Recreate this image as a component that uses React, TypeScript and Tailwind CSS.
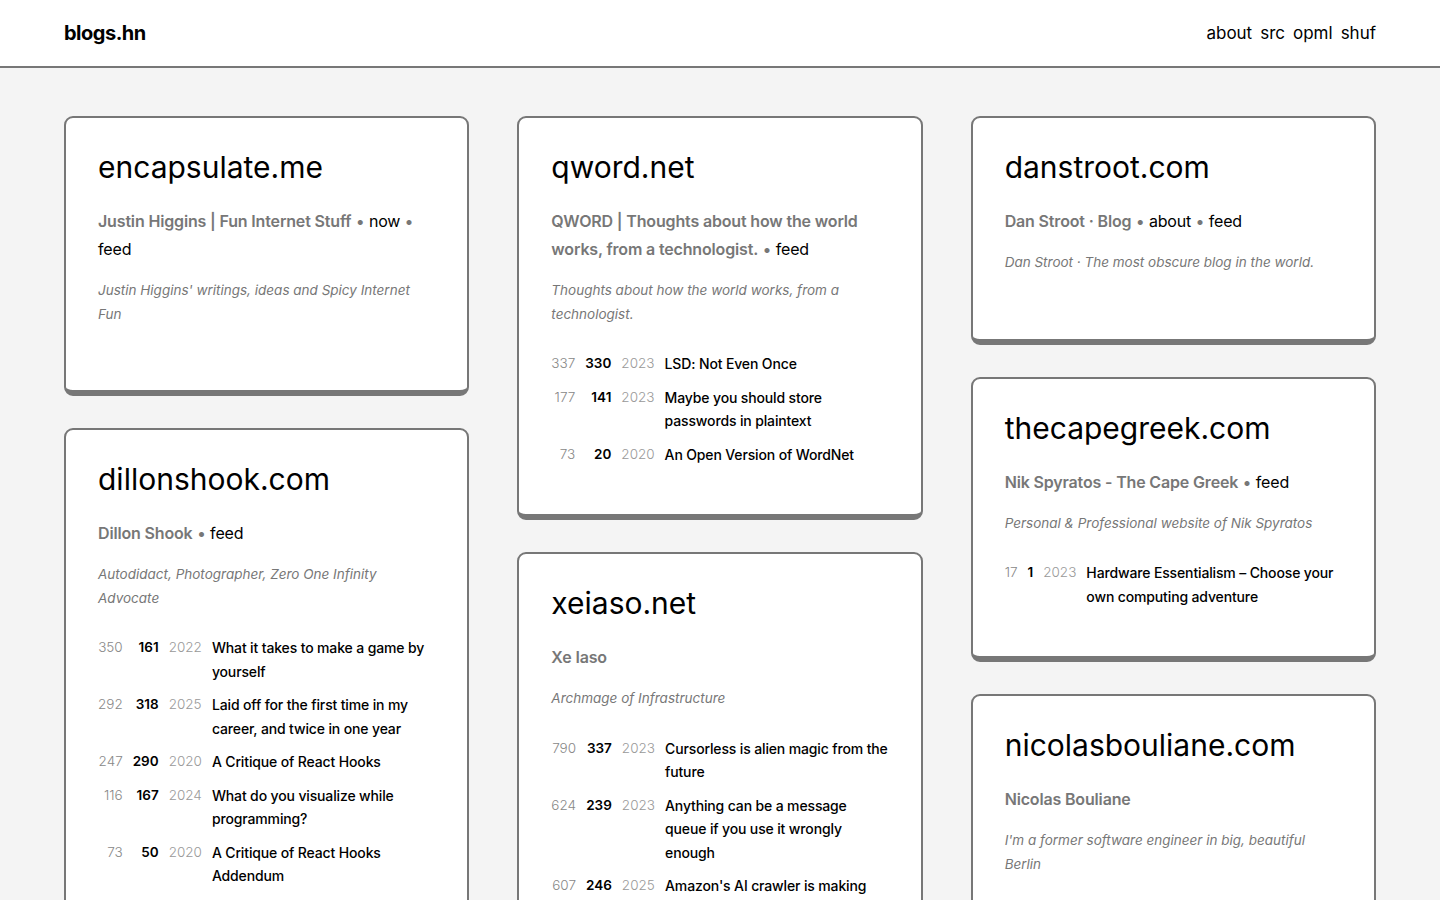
import React from 'react';

type Post = { points: number; comments: number; year: number; title: string };
type Blog = {
  domain: string;
  name: string;
  links: string[];
  description: string;
  posts: Post[];
};

const blogs: Record<string, Blog> = {
  encapsulate: {
    domain: 'encapsulate.me',
    name: 'Justin Higgins | Fun Internet Stuff',
    links: ['now', 'feed'],
    description: "Justin Higgins' writings, ideas and Spicy Internet Fun",
    posts: [],
  },
  dillon: {
    domain: 'dillonshook.com',
    name: 'Dillon Shook',
    links: ['feed'],
    description: 'Autodidact, Photographer, Zero One Infinity Advocate',
    posts: [
      { points: 350, comments: 161, year: 2022, title: 'What it takes to make a game by yourself' },
      { points: 292, comments: 318, year: 2025, title: 'Laid off for the first time in my career, and twice in one year' },
      { points: 247, comments: 290, year: 2020, title: 'A Critique of React Hooks' },
      { points: 116, comments: 167, year: 2024, title: 'What do you visualize while programming?' },
      { points: 73, comments: 50, year: 2020, title: 'A Critique of React Hooks Addendum' },
    ],
  },
  qword: {
    domain: 'qword.net',
    name: 'QWORD | Thoughts about how the world works, from a technologist.',
    links: ['feed'],
    description: 'Thoughts about how the world works, from a technologist.',
    posts: [
      { points: 337, comments: 330, year: 2023, title: 'LSD: Not Even Once' },
      { points: 177, comments: 141, year: 2023, title: 'Maybe you should store passwords in plaintext' },
      { points: 73, comments: 20, year: 2020, title: 'An Open Version of WordNet' },
    ],
  },
  xeiaso: {
    domain: 'xeiaso.net',
    name: 'Xe Iaso',
    links: [],
    description: 'Archmage of Infrastructure',
    posts: [
      { points: 790, comments: 337, year: 2023, title: 'Cursorless is alien magic from the future' },
      { points: 624, comments: 239, year: 2023, title: 'Anything can be a message queue if you use it wrongly enough' },
      { points: 607, comments: 246, year: 2025, title: "Amazon's AI crawler is making my git server unstable" },
      { points: 412, comments: 198, year: 2024, title: 'Anubis works' },
    ],
  },
  danstroot: {
    domain: 'danstroot.com',
    name: 'Dan Stroot · Blog',
    links: ['about', 'feed'],
    description: 'Dan Stroot · The most obscure blog in the world.',
    posts: [],
  },
  capegreek: {
    domain: 'thecapegreek.com',
    name: 'Nik Spyratos - The Cape Greek',
    links: ['feed'],
    description: 'Personal & Professional website of Nik Spyratos',
    posts: [
      { points: 17, comments: 1, year: 2023, title: 'Hardware Essentialism – Choose your own computing adventure' },
    ],
  },
  bouliane: {
    domain: 'nicolasbouliane.com',
    name: 'Nicolas Bouliane',
    links: [],
    description: "I'm a former software engineer in big, beautiful Berlin",
    posts: [
      { points: 120, comments: 64, year: 2023, title: 'I moved my blog to a static site' },
    ],
  },
};

const columns: Blog[][] = [
  [blogs.encapsulate, blogs.dillon],
  [blogs.qword, blogs.xeiaso],
  [blogs.danstroot, blogs.capegreek, blogs.bouliane],
];

function BlogCard({ blog }: { blog: Blog }) {
  return (
    <article className="bg-white border-2 border-b-[6px] border-[#777] rounded-[9px] px-8 pt-8 pb-12">
      <h2 className="text-[30px] leading-[34px] font-normal text-black mb-[23px]">
        <a href="#">{blog.domain}</a>
      </h2>
      <p className="text-[16px] leading-[28px] text-[#777] mb-4 tracking-[-0.01em]">
        <span className="font-semibold">{blog.name}</span>
        {blog.links.map((l) => (
          <React.Fragment key={l}>
            {' • '}
            <a href="#" className="text-black">
              {l}
            </a>
          </React.Fragment>
        ))}
      </p>
      <p className="text-[13.5px] leading-[23.5px] italic text-[#777] mb-4">{blog.description}</p>
      {blog.posts.length > 0 && (
        <div className="mt-[26px] grid grid-cols-[auto_auto_auto_1fr] gap-x-[10px] gap-y-[10px] text-[14px] leading-[23.5px]">
          {blog.posts.map((p) => (
            <React.Fragment key={p.title}>
              <span className="text-right text-[13.5px] text-[#888] font-light">{p.points}</span>
              <span className="text-right text-[13.5px] font-semibold text-black">{p.comments}</span>
              <span className="text-[13.5px] text-[#999] font-light">{p.year}</span>
              <a href="#" className="text-black font-medium tracking-[-0.01em]">
                {p.title}
              </a>
            </React.Fragment>
          ))}
        </div>
      )}
    </article>
  );
}

export default function App() {
  return (
    <div className="min-h-screen bg-[#f4f4f4] text-black" style={{ fontFamily: 'Inter, "Noto Sans", sans-serif' }}>
      <header className="bg-white border-b-2 border-[#777] h-[68px] px-16 flex items-center justify-between">
        <a href="#" className="text-[20px] font-bold tracking-tight">
          blogs.hn
        </a>
        <nav className="flex gap-2 text-[17px] pt-px">
          <a href="#">about</a>
          <a href="#">src</a>
          <a href="#">opml</a>
          <a href="#">shuf</a>
        </nav>
      </header>
      <main className="px-16 pt-12 pb-12 grid grid-cols-3 gap-x-12">
        {columns.map((col, i) => (
          <div key={i} className="flex flex-col gap-8">
            {col.map((b) => (
              <BlogCard key={b.domain} blog={b} />
            ))}
          </div>
        ))}
      </main>
    </div>
  );
}
